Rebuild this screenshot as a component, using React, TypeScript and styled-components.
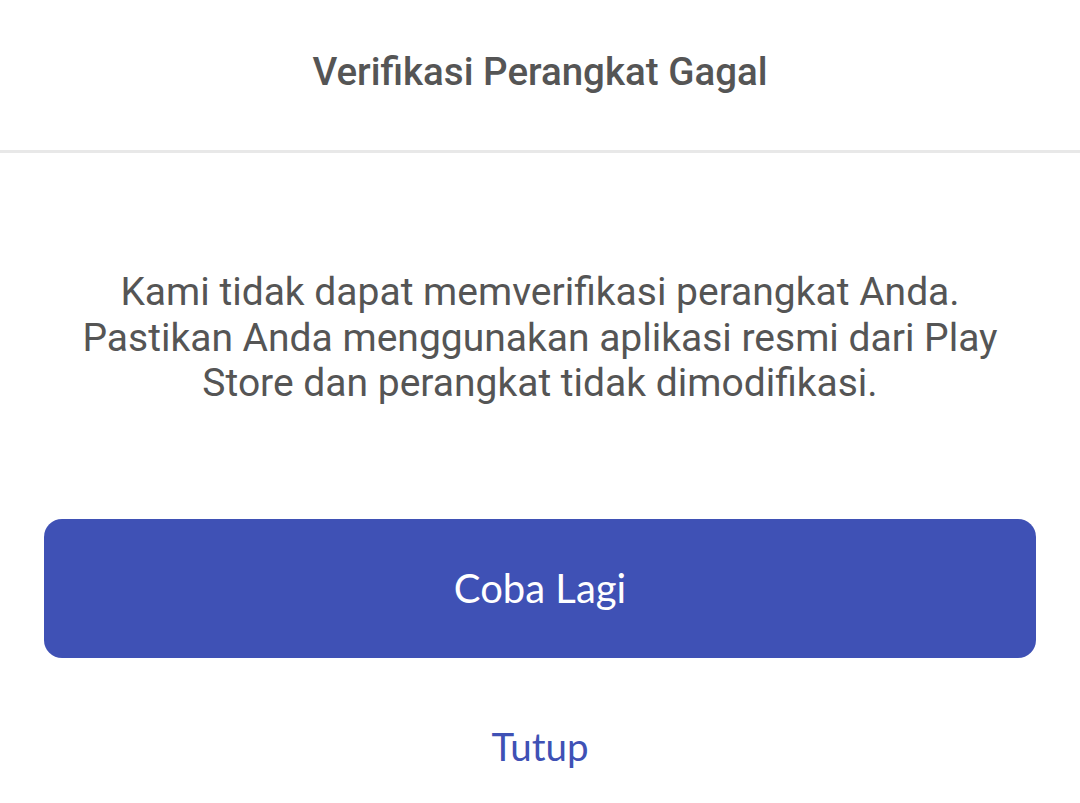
import React from "react";
import styled, { createGlobalStyle } from "styled-components";

const GlobalStyle = createGlobalStyle`
  html, body {
    margin: 0;
    padding: 0;
    background: #ffffff;
  }
  body {
    font-family: Roboto, "Liberation Sans", sans-serif;
  }
`;

const Screen = styled.div`
  width: 1080px;
  height: 803px;
  display: flex;
  flex-direction: column;
  background: #ffffff;
  overflow: hidden;
`;

const Header = styled.header`
  height: 153px;
  display: flex;
  align-items: center;
  justify-content: center;
  border-bottom: 3px solid #e8e8e8;
  box-sizing: border-box;
  padding-bottom: 8px;
`;

const Title = styled.h1`
  margin: 0;
  font-family: Roboto, sans-serif;
  font-weight: 500;
  font-size: 38.5px;
  color: #555555;
`;

const Body = styled.div`
  display: flex;
  flex-direction: column;
  padding: 0 44px;
`;

const Message = styled.p`
  margin: 117px 0 0;
  font-family: Roboto, sans-serif;
  font-weight: 400;
  font-size: 39px;
  line-height: 45.5px;
  color: #555555;
  text-align: center;
`;

const PrimaryButton = styled.button`
  margin-top: 112px;
  height: 139px;
  width: 100%;
  border: none;
  border-radius: 18px;
  background: #3f51b5;
  color: #ffffff;
  font-family: Lato, sans-serif;
  font-weight: 400;
  font-size: 40px;
  cursor: pointer;
`;

const TextButton = styled.button`
  margin-top: 65px;
  align-self: center;
  border: none;
  background: transparent;
  color: #3f51b5;
  font-family: Lato, sans-serif;
  font-weight: 400;
  font-size: 38.5px;
  padding: 0;
  cursor: pointer;
`;

export default function App() {
  return (
    <>
      <GlobalStyle />
      <Screen>
        <Header>
          <Title>Verifikasi Perangkat Gagal</Title>
        </Header>
        <Body>
          <Message>
            Kami tidak dapat memverifikasi perangkat Anda.
            <br />
            Pastikan Anda menggunakan aplikasi resmi dari Play
            <br />
            Store dan perangkat tidak dimodifikasi.
          </Message>
          <PrimaryButton>Coba Lagi</PrimaryButton>
          <TextButton>Tutup</TextButton>
        </Body>
      </Screen>
    </>
  );
}
